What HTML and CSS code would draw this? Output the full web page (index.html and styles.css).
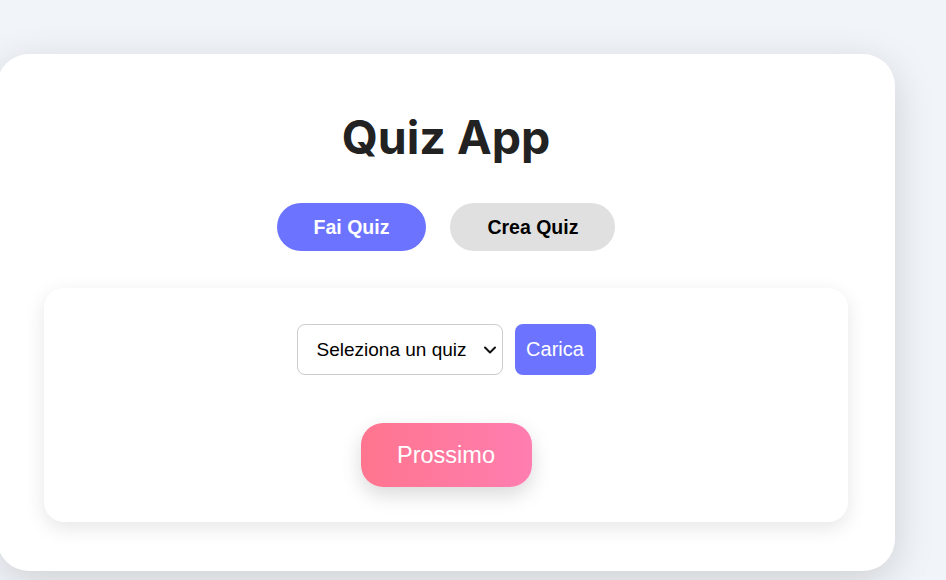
FILE: index.html
```html
<!DOCTYPE html>
<html lang="it">
<head>
<meta charset="utf-8">
<title>Quiz App</title>
<link rel="stylesheet" href="styles.css">
</head>
<body>
<div class="app">
  <h1 class="title">Quiz App</h1>
  <div class="tabs">
    <button class="tab tab-active">Fai Quiz</button>
    <button class="tab">Crea Quiz</button>
  </div>
  <div class="panel">
    <div class="loader">
      <span class="select-wrap">
        <select class="quiz-select">
          <option>Seleziona un quiz</option>
        </select>
        <svg class="chevron" width="12" height="8" viewBox="0 0 12 8" aria-hidden="true">
          <path d="M1 1.5 L6 6.5 L11 1.5" fill="none" stroke="#111" stroke-width="2" stroke-linecap="round" stroke-linejoin="round"/>
        </svg>
      </span>
      <button class="load-btn">Carica</button>
    </div>
    <button class="next-btn">Prossimo</button>
  </div>
</div>
</body>
</html>
```
FILE: styles.css
```css
html {
  margin: 0;
  padding: 0;
  background: #f1f4f8;
  overflow: hidden;
}
body {
  margin: 0;
  padding: 54px 0 0;
  box-sizing: border-box;
  min-height: 580px;
  background: #f1f4f8;
  font-family: "Liberation Sans", Arial, sans-serif;
}
.app {
  width: 898px;
  box-sizing: border-box;
  margin-left: -3px;
  background: #fff;
  border-radius: 32px;
  padding: 55px 47px 49px;
  box-shadow: 0 10px 40px rgba(0, 0, 0, 0.15);
  text-align: center;
}
.title {
  font-family: Inter, "Liberation Sans", sans-serif;
  font-weight: 700;
  font-size: 46.5px;
  line-height: 56px;
  color: #222;
  margin: 0 0 38px;
}
.tabs {
  display: flex;
  justify-content: center;
  gap: 24px;
  margin-bottom: 37px;
}
.tab {
  height: 48px;
  border: none;
  border-radius: 24px;
  padding: 0 37px;
  font-family: "Liberation Sans", Arial, sans-serif;
  font-weight: 700;
  font-size: 19.5px;
  background: #e0e0e0;
  color: #000;
}
.tab-active {
  background: #6c74ff;
  color: #fff;
}
.panel {
  background: #fff;
  border-radius: 20px;
  padding: 36px 20px 35px;
  box-shadow: 0 6px 20px rgba(0, 0, 0, 0.10);
  display: flex;
  flex-direction: column;
  align-items: center;
  gap: 48px;
}
.loader {
  display: flex;
  gap: 12px;
  align-items: center;
}
.select-wrap {
  position: relative;
  display: block;
}
.quiz-select {
  display: block;
  width: 206px;
  height: 51px;
  border: 1px solid #ccc;
  border-radius: 8px;
  background: #fff;
  padding: 0 30px 0 19px;
  font-family: "Liberation Sans", Arial, sans-serif;
  font-size: 19px;
  color: #000;
  appearance: none;
  -webkit-appearance: none;
}
.chevron {
  position: absolute;
  right: 7px;
  top: 22px;
  pointer-events: none;
}
.load-btn {
  height: 51px;
  width: 81px;
  border: none;
  border-radius: 8px;
  background: #6c74ff;
  color: #fff;
  font-family: "Liberation Sans", Arial, sans-serif;
  font-size: 20px;
  padding: 0;
}
.next-btn {
  width: 171px;
  height: 64px;
  border: none;
  border-radius: 22px;
  background: linear-gradient(90deg, #ff758f, #ff7eb0);
  color: #fff;
  font-family: "Liberation Sans", Arial, sans-serif;
  font-size: 23.5px;
  box-shadow: 0 8px 20px rgba(0, 0, 0, 0.15);
}
```
